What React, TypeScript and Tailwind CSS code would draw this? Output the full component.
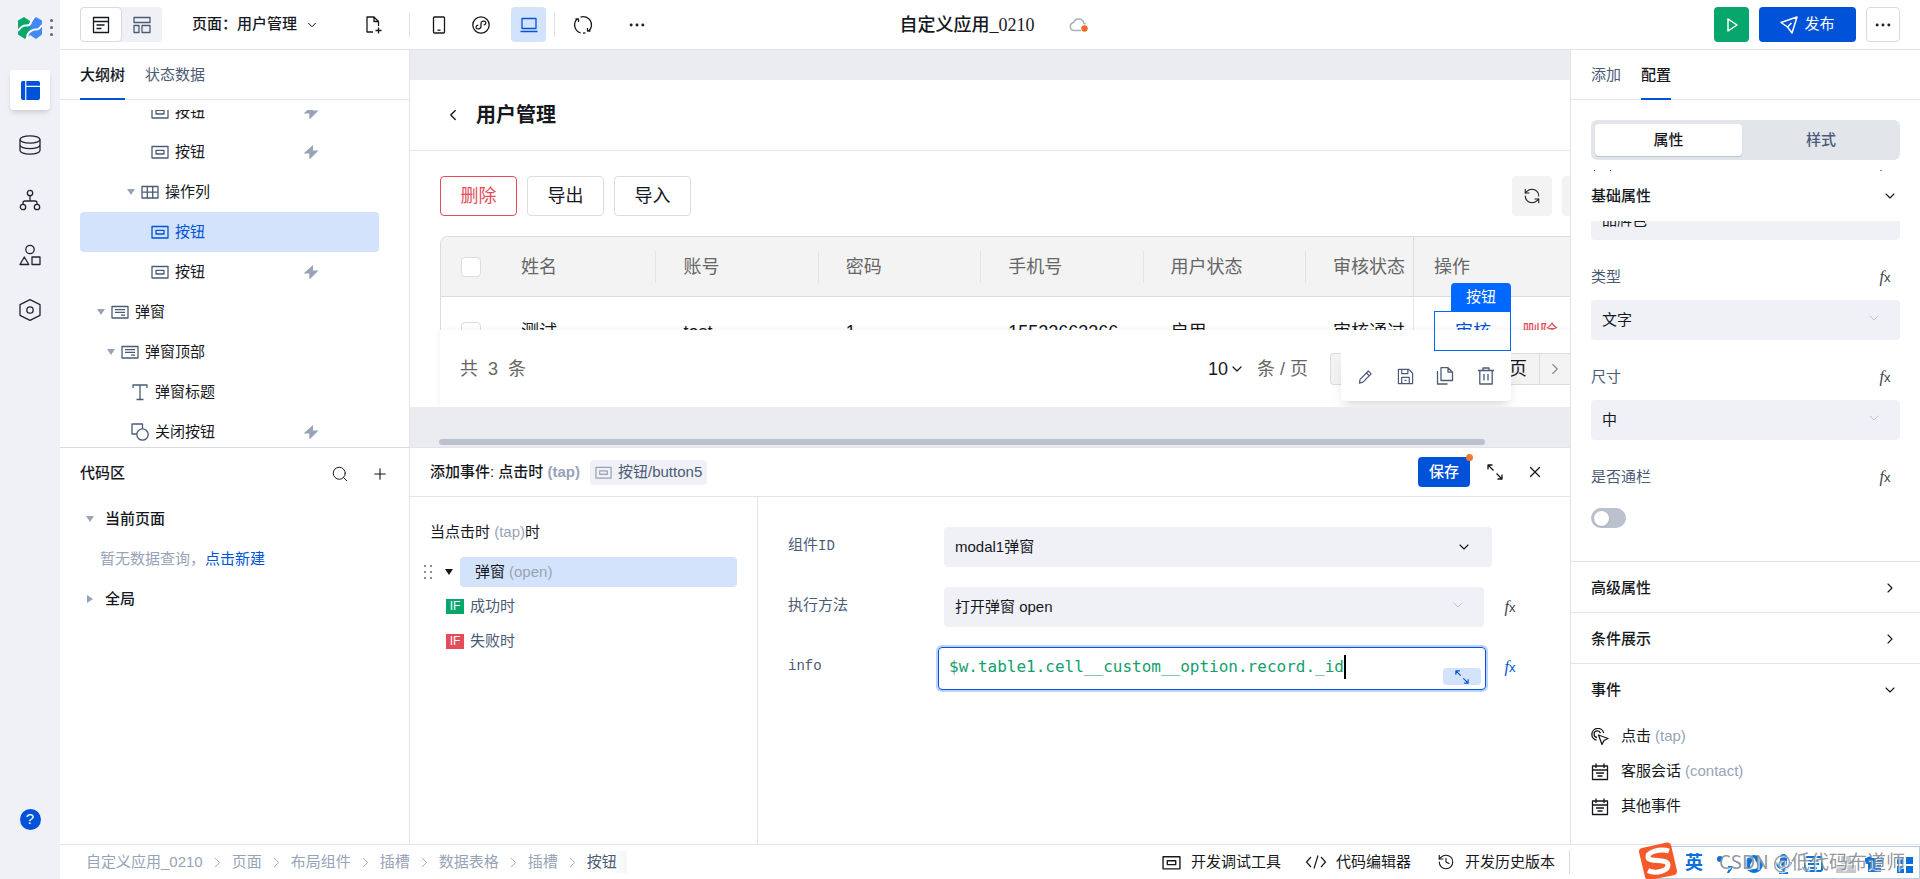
import type { ReactNode } from "react";
import {
  ChevronDown,
  ChevronLeft,
  ChevronRight,
  Ellipsis,
  History,
  Plus,
  RefreshCw,
  Search,
  X,
} from "lucide-react";

type IconProps = { className?: string };

function Svg({ className, box = 20, children }: IconProps & { box?: number; children: ReactNode }) {
  return (
    <svg
      viewBox={`0 0 ${box} ${box}`}
      className={className}
      fill="none"
      stroke="currentColor"
      strokeWidth="1.3"
      strokeLinejoin="round"
      aria-hidden="true"
    >
      {children}
    </svg>
  );
}

/* ---------- icons ---------- */

const Logo = () => (
  <svg viewBox="0 0 24 22" className="h-[22px] w-6" aria-hidden="true">
    <path d="M0 3.500 6 0l6 4v14l-5 4-7-4.500z" fill="#0aa66c" />
    <path d="M24 3.500 18 0l-6 5v13l6 4 6-4.500z" fill="#4388f5" />
    <path
      d="M0 14Q4 8 8 8.500 12 9 13 5L16 0M9 22Q9 16 13 14q3-2 5-1.500Q21 13 24 8"
      stroke="#fff"
      strokeWidth="2"
      fill="none"
    />
  </svg>
);

const LayoutIcon = ({ className }: IconProps) => (
  <svg viewBox="0 0 20 20" className={className} aria-hidden="true">
    <path d="M2 0h2.400v20H2a2 2 0 0 1-2-2V2a2 2 0 0 1 2-2zM5.600 0H18a2 2 0 0 1 2 2v3H5.600zM5.600 6.200H20V18a2 2 0 0 1-2 2H5.600z" fill="currentColor" />
  </svg>
);

const DatabaseIcon = ({ className }: IconProps) => (
  <Svg className={className} box={22}>
    <ellipse cx="11" cy="5.500" rx="10" ry="3.700" />
    <path d="M1 5.500v11c0 2 4.500 3.700 10 3.700s10-1.700 10-3.700v-11M1 11c0 2 4.500 3.700 10 3.700S21 13 21 11" />
  </Svg>
);

const FlowIcon = ({ className }: IconProps) => (
  <Svg className={className} box={22}>
    <circle cx="11" cy="4" r="2.700" />
    <circle cx="4" cy="18" r="2.700" />
    <circle cx="18" cy="18" r="2.700" />
    <path d="M11 6.700V12M4 15.300V14q0-2 2-2h10q2 0 2 2v1.300" />
  </Svg>
);

const ShapesIcon = ({ className }: IconProps) => (
  <Svg className={className} box={22}>
    <circle cx="11" cy="5.500" r="4.200" />
    <path d="M5.300 13 9.800 20.500H1zM13 13h8v7.500h-8z" />
  </Svg>
);

const HexIcon = ({ className }: IconProps) => (
  <Svg className={className} box={22}>
    <path d="m11 0.700 10 5v10.600l-10 5-10-5V5.700z" />
    <circle cx="11" cy="11" r="3.200" />
  </Svg>
);

const FormIcon = ({ className }: IconProps) => (
  <Svg className={className} box={18}>
    <path d="M1.500 1.500h15v15h-15zM1.500 5.500h15M4.500 9h8M4.500 12.500h5" />
  </Svg>
);

const BlocksIcon = ({ className }: IconProps) => (
  <Svg className={className} box={18}>
    <path d="M1 1.500h16v5H1zM1 9.500h5v7H1zM9 9.500h8v7H9z" />
  </Svg>
);

const NewPageIcon = ({ className }: IconProps) => (
  <Svg className={className} box={18}>
    <path d="M8 16H2V1h7l4.500 4.500V10M9 1v4.500h4.500M13.500 11.500v6M10.500 14.500h6" />
  </Svg>
);

const PhoneIcon = ({ className }: IconProps) => (
  <Svg className={className} box={18}>
    <rect x="3.500" y="1" width="11" height="16" rx="1" />
    <path d="M7.500 14.200h3" />
  </Svg>
);

const MiniProgramIcon = ({ className }: IconProps) => (
  <Svg className={className} box={18}>
    <circle cx="9" cy="9" r="8.200" />
    <path d="M6.300 9.200c-2 .2-2.600 1.600-2 2.800.8 1.300 4.700 1.300 4.700-1.500V7.300c0-2.600 3.800-2.700 4.600-1.300.7 1.200.1 2.600-1.900 2.800" />
  </Svg>
);

const LaptopIcon = ({ className }: IconProps) => (
  <Svg className={className} box={18}>
    <path d="M2 2.500h14v10H2zM0.500 15.500h17" />
  </Svg>
);

const CycleIcon = ({ className }: IconProps) => (
  <Svg className={className} box={20}>
    <path d="M7.500 17.800A8.200 8.200 0 0 1 4.200 4M2.500 4h3v3M7.500 2.200a8.200 8.200 0 0 1 8.300 13.800M17.500 16h-3v-3M10 18.200l2.500-.4" />
  </Svg>
);

const CloudIcon = ({ className }: IconProps) => (
  <svg viewBox="0 0 20 16" className={className} fill="none" aria-hidden="true">
    <path d="M12 13.500H5a4 4 0 0 1-.5-7.900 5.500 5.500 0 0 1 10.500.8l1.500.8" stroke="#a3aec0" strokeWidth="1.500" />
    <circle cx="15.500" cy="11.500" r="3.200" fill="#ed6b2d" />
  </svg>
);

const SendIcon = ({ className }: IconProps) => (
  <Svg className={className} box={18}>
    <path d="M1 6.500 17 1l-5 16-4.500-6zM7.500 11l4-4" strokeWidth="1.500" />
  </Svg>
);

const ButtonIcon = ({ className }: IconProps) => (
  <Svg className={className} box={18}>
    <path d="M1 3.500h16v11.500H1zM5 7.300h8v3.700H5z" />
  </Svg>
);

const GridIcon = ({ className }: IconProps) => (
  <Svg className={className} box={18}>
    <path d="M1 3.500h16v11.500H1zM1 9.200h16M6.300 3.500v11.500M11.700 3.500v11.500" />
  </Svg>
);

const ModalIcon = ({ className }: IconProps) => (
  <Svg className={className} box={18}>
    <path d="M1 3.500h16v11.500H1zM4 6.700h10M4 9.400h10M10 12.200h4" />
  </Svg>
);

const CloseBtnIcon = ({ className }: IconProps) => (
  <Svg className={className} box={18}>
    <path d="M6 11H1V1h10.500v5" />
    <circle cx="11.500" cy="11.500" r="5.700" />
  </Svg>
);

const TextIcon = ({ className }: IconProps) => (
  <Svg className={className} box={18}>
    <path d="M2 5V2h14v3M9 2v14.500M5.500 16.500h7" />
  </Svg>
);

const Bolt = () => (
  <svg viewBox="0 0 16 16" className="h-4 w-4 text-[#97a3b7]" fill="currentColor" aria-hidden="true">
    <path d="M10 1 0.500 9.500h5.700L6.500 15.500 15.500 6.500H10z" />
  </svg>
);

const Caret = ({ className }: IconProps) => (
  <svg viewBox="0 0 8 6" className={className} fill="currentColor" aria-hidden="true">
    <path d="M0 0h8L4 6z" />
  </svg>
);

const ExpandIcon = ({ className }: IconProps) => (
  <Svg className={className} box={16}>
    <path d="M1 5.500V1h4.500M1 1l5.500 5.500M15 10.500V15h-4.500M15 15 9.500 9.500" />
  </Svg>
);

const CalendarIcon = ({ className }: IconProps) => (
  <Svg className={className} box={18}>
    <path d="M1.500 3h15v13.500h-15zM1.500 7h15M5 0.500V5M13 0.500V5M5 10h8M6.500 13h5" />
  </Svg>
);

const TapIcon = ({ className }: IconProps) => (
  <Svg className={className} box={18}>
    <path d="M5.500 12.200A6 6 0 1 1 12.700 5M6 9.500A3.300 3.300 0 1 1 9.500 5.200M7.500 7l9.500 3.500-4 2-2 4z" />
  </Svg>
);

const PencilIcon = ({ className }: IconProps) => (
  <Svg className={className} box={18}>
    <path d="m2.500 16 .8-4L12 3.200l3 3L6.300 15zM10 5.300l3 3" />
  </Svg>
);

const SaveIcon = ({ className }: IconProps) => (
  <Svg className={className} box={18}>
    <path d="M1.500 1.500h11l4 4v11h-15zM5 1.500V6h6.500V1.500M5 16.500V10h8v6.500M8 13h2" />
  </Svg>
);

const CopyIcon = ({ className }: IconProps) => (
  <Svg className={className} box={18}>
    <path d="M5 0.700h7l4.500 4.500v8.300H5zM12 .7v4.500h4.500M1.500 4v13h10" />
  </Svg>
);

const TrashIcon = ({ className }: IconProps) => (
  <Svg className={className} box={18}>
    <path d="M1 3.500h16M6 3.500V1h6v2.500M2.800 3.500V17h12.400V3.500M7 7v6.500M11 7v6.500" />
  </Svg>
);

const CodeIcon = ({ className }: IconProps) => (
  <svg viewBox="0 0 22 16" className={className} fill="none" stroke="currentColor" strokeWidth="1.200" aria-hidden="true">
    <path d="M6 3 1.500 8 6 13M16 3l4.500 5-4.500 5M13 1.500 9 14.500" />
  </svg>
);

function Fx({ className = "h-5 text-[#3b3f47]" }: IconProps) {
  return (
    <button type="button" aria-label="表达式" className={`flex w-4 shrink-0 items-center justify-center ${className}`}>
      <span className="text-[13px] leading-5">
        <i className="font-['Liberation_Serif',serif] text-base leading-5">f</i>x
      </span>
    </button>
  );
}

/* ---------- data ---------- */

type TreeNode = {
  label: string;
  icon: (p: IconProps) => ReactNode;
  pad: string;
  open?: boolean;
  bolt?: boolean;
  active?: boolean;
};

const tree: TreeNode[] = [
  { label: "按钮", icon: ButtonIcon, pad: "pl-[57px]", bolt: true },
  { label: "按钮", icon: ButtonIcon, pad: "pl-[57px]", bolt: true },
  { label: "操作列", icon: GridIcon, pad: "pl-[47px]", open: true },
  { label: "按钮", icon: ButtonIcon, pad: "pl-[57px]", active: true },
  { label: "按钮", icon: ButtonIcon, pad: "pl-[57px]", bolt: true },
  { label: "弹窗", icon: ModalIcon, pad: "pl-[17px]", open: true },
  { label: "弹窗顶部", icon: ModalIcon, pad: "pl-[27px]", open: true },
  { label: "弹窗标题", icon: TextIcon, pad: "pl-[37px]" },
  { label: "关闭按钮", icon: CloseBtnIcon, pad: "pl-[37px]", bolt: true },
];

const columns = ["姓名", "账号", "密码", "手机号", "用户状态"];
const record = ["测试", "test", "1", "15522663366", "启用"];
const crumbs = ["自定义应用_0210", "页面", "布局组件", "插槽", "数据表格", "插槽"];

const selectCls =
  "h-10 w-full appearance-none rounded bg-[#eff1f6] pl-[11px] pr-10 text-[15px] text-[#16181d] outline-none";

/* ---------- parts ---------- */

function SideRail() {
  const items = [DatabaseIcon, FlowIcon, ShapesIcon, HexIcon];
  const names = ["数据源", "流程", "组件", "设置"];
  return (
    <nav className="flex w-[60px] shrink-0 flex-col items-center bg-[#eff1f6] pb-[49px]">
      <div className="flex h-[55px] w-full items-center gap-2 pl-[18px]">
        <Logo />
        <span className="flex flex-col gap-1">
          <i className="h-[3px] w-[3px] rounded-full bg-[#5b6880]" />
          <i className="h-[3px] w-[3px] rounded-full bg-[#5b6880]" />
          <i className="h-[3px] w-[3px] rounded-full bg-[#5b6880]" />
        </span>
      </div>
      <div className="mt-[15px] flex flex-col gap-[15px]">
        <button type="button" aria-label="页面" className="flex size-10 items-center justify-center rounded bg-white text-[#0052d9] shadow-md">
          <LayoutIcon className="size-[19px]" />
        </button>
        {items.map((Icon, i) => (
          <button key={names[i]} type="button" aria-label={names[i]} className="flex size-10 items-center justify-center text-[#22252b]">
            <Icon className="size-[22px]" />
          </button>
        ))}
      </div>
      <button type="button" aria-label="帮助" className="mt-auto flex size-[21px] items-center justify-center rounded-full bg-[#0052d9] text-[15px] text-white">
        ?
      </button>
    </nav>
  );
}

function TopBar() {
  return (
    <header className="flex h-[50px] shrink-0 items-center border-b border-[#e1e4ea] px-5">
      <div className="flex flex-1 items-center">
        <div className="flex rounded bg-[#eff1f6]">
          <button type="button" aria-label="大纲视图" className="flex h-[35px] w-[42px] items-center justify-center rounded border border-[#d5dae3] bg-white">
            <FormIcon className="size-[18px]" />
          </button>
          <button type="button" aria-label="布局视图" className="flex h-[35px] w-10 items-center justify-center text-[#4b5b76]">
            <BlocksIcon className="size-[18px]" />
          </button>
        </div>
        <button type="button" className="ml-[30px] flex items-center gap-2 text-[15px] font-medium whitespace-nowrap">
          页面：用户管理
          <ChevronDown className="size-[14px]" strokeWidth={1.700} />
        </button>
        <button type="button" aria-label="新建页面" className="ml-[46px]">
          <NewPageIcon className="size-[18px]" />
        </button>
        <span className="mr-[17px] ml-[26px] h-6 w-px bg-[#dde1e8]" />
        <div className="flex gap-2">
          <button type="button" aria-label="手机" className="flex h-[35px] w-[23px] items-center justify-center">
            <PhoneIcon className="size-[18px]" />
          </button>
          <button type="button" aria-label="小程序" className="flex h-[35px] w-[45px] items-center justify-center">
            <MiniProgramIcon className="size-[18px]" />
          </button>
          <button type="button" aria-label="电脑" className="flex size-[35px] items-center justify-center rounded bg-[#d4e3fc] text-[#0052d9]">
            <LaptopIcon className="size-[18px]" />
          </button>
        </div>
        <span className="mx-2 h-6 w-px bg-[#dde1e8]" />
        <button type="button" aria-label="刷新" className="mx-[10px]">
          <CycleIcon className="size-5" />
        </button>
        <button type="button" aria-label="更多工具" className="ml-6">
          <Ellipsis className="size-5" strokeWidth={1.500} />
        </button>
      </div>
      <div className="flex items-center gap-[34px] pl-2">
        <h1 className="font-['Liberation_Serif','Noto_Sans_CJK_SC',serif] text-lg font-medium">自定义应用_0210</h1>
        <CloudIcon className="h-4 w-5" />
      </div>
      <div className="flex flex-1 items-center justify-end gap-[10px]">
        <button type="button" aria-label="预览" className="flex size-[35px] items-center justify-center rounded bg-[#07a66d] text-white">
          <Svg className="size-4" box={16}>
            <path d="M4 2v12l9-6z" strokeWidth="1.500" />
          </Svg>
        </button>
        <button type="button" className="flex h-[35px] w-[97px] items-center justify-center gap-[6px] rounded bg-[#0052d9] text-[15px] text-white">
          <SendIcon className="size-[18px]" />
          发布
        </button>
        <button type="button" aria-label="更多" className="flex h-[35px] w-[34px] items-center justify-center rounded border border-[#d5dae3]">
          <Ellipsis className="size-5" strokeWidth={1.500} />
        </button>
      </div>
    </header>
  );
}

function LeftPanel() {
  return (
    <aside className="flex w-[350px] shrink-0 flex-col border-r border-[#e1e4ea]">
      <section className="flex h-1/2 flex-col">
        <div className="flex h-[50px] shrink-0 gap-5 border-b border-[#e1e4ea] px-5 text-[15px]">
          <button type="button" className="-mb-px border-b-2 border-[#0052d9] pt-[3px] font-medium">大纲树</button>
          <button type="button" className="-mb-px border-b-2 border-transparent pt-[3px] text-[#4b5b76]">状态数据</button>
        </div>
        <div className="mt-[10px] min-h-0 flex-1 overflow-hidden pr-[30px] pl-5">
          <ul className="-mt-[18px]">
            {tree.map(({ icon: Icon, ...n }, i) => (
              <li
                key={i}
                className={`flex h-10 items-center rounded pr-[60px] text-[15px] ${n.pad} ${n.active ? "bg-[#d4e3fc] text-[#0052d9]" : ""}`}
              >
                <span className="flex w-[14px] shrink-0">{n.open && <Caret className="h-[6px] w-2 text-[#97a3b7]" />}</span>
                <Icon className={`mr-[6px] size-[18px] ${n.active ? "" : "text-[#4b5b76]"}`} />
                {n.label}
                <span className="ml-auto">{n.bolt && <Bolt />}</span>
              </li>
            ))}
          </ul>
        </div>
      </section>
      <section className="h-1/2 overflow-hidden border-t border-[#d5dae3] px-5 text-[15px]">
        <div className="flex h-[51px] items-center">
          <h2 className="flex-1 font-medium">代码区</h2>
          <button type="button" aria-label="搜索" className="mr-[22px]">
            <Search className="size-[18px]" strokeWidth={1.300} />
          </button>
          <button type="button" aria-label="新增">
            <Plus className="size-[18px]" strokeWidth={1.500} />
          </button>
        </div>
        <button type="button" className="flex h-10 items-center gap-[11px] pl-[6px] font-medium">
          <Caret className="h-[6px] w-2 text-[#97a3b7]" />
          当前页面
        </button>
        <p className="flex h-10 items-center pl-5 text-[#97a3b7]">
          暂无数据查询，<a href="#new" className="text-[#0052d9]">点击新建</a>
        </p>
        <button type="button" className="flex h-10 items-center gap-[11px] pl-[6px] font-medium">
          <Caret className="h-[6px] w-2 -rotate-90 text-[#97a3b7]" />
          全局
        </button>
      </section>
    </aside>
  );
}

function SelectionOverlay() {
  return (
    <div className="absolute top-[203px] right-[59px] flex flex-col items-end">
      <span className="flex h-7 w-[60px] items-center justify-center rounded-t bg-[#0067ff] text-[15px] text-white">按钮</span>
      <span className="h-10 w-[77px] border border-[#0067ff]" />
      <div className="flex h-[50px] w-[170px] items-center justify-around rounded-b bg-white px-[5px] text-[#4b5b76] shadow-lg">
        <button type="button" aria-label="编辑"><PencilIcon className="size-[17px]" /></button>
        <button type="button" aria-label="保存为区块"><SaveIcon className="size-[17px]" /></button>
        <button type="button" aria-label="复制"><CopyIcon className="size-[18px]" /></button>
        <button type="button" aria-label="删除组件"><TrashIcon className="size-[18px]" /></button>
      </div>
    </div>
  );
}

function Canvas() {
  const th = "h-[60px] border-b border-[#dcdcdc] p-0 text-left font-normal";
  return (
    <section className="flex h-1/2 flex-col bg-[#ebecf0] pt-[30px]">
      <div className="relative flex min-h-0 flex-1 flex-col overflow-hidden bg-white">
        <div className="flex h-[71px] shrink-0 items-center gap-[14px] border-b border-[#e7e7e7] pl-[34px]">
          <ChevronLeft className="size-[18px]" strokeWidth={1.800} />
          <h2 className="text-xl font-bold">用户管理</h2>
        </div>
        <div className="flex shrink-0 items-center gap-[10px] pt-[25px] pl-[30px] text-lg">
          <button type="button" className="h-10 w-[77px] rounded border border-[#e34d59] text-[#e34d59]">删除</button>
          <button type="button" className="h-10 w-[77px] rounded border border-[#dcdcdc]">导出</button>
          <button type="button" className="h-10 w-[77px] rounded border border-[#dcdcdc]">导入</button>
          <button type="button" aria-label="刷新表格" className="ml-auto flex size-10 items-center justify-center rounded bg-[#f3f3f3]">
            <RefreshCw className="size-[18px] -scale-x-100" strokeWidth={1.400} />
          </button>
          <span className="h-10 w-2 rounded-l bg-[#f3f3f3]" />
        </div>
        <div className="mt-5 ml-[30px] min-h-0 flex-1 overflow-hidden rounded-tl-lg border-t border-l border-[#dcdcdc]">
          <table className="w-full table-fixed border-separate border-spacing-0 text-lg whitespace-nowrap">
            <thead className="bg-[#f3f3f3] text-[#666]">
              <tr>
                <th className={`${th} w-[53px]`}>
                  <input type="checkbox" aria-label="全选" className="ml-5 block size-5 appearance-none rounded border border-[#dcdcdc] bg-white" />
                </th>
                {columns.map((c) => (
                  <th key={c} className={th}>
                    <div className="flex h-8 items-center border-r border-[#e3e3e3] pl-[27px]">{c}</div>
                  </th>
                ))}
                <th className={`${th} w-[108px] overflow-hidden border-r pl-[27px]`}>审核状态</th>
                <th className={`${th} w-[156px] pl-5`}>操作</th>
              </tr>
            </thead>
            <tbody className="text-[#16181d]">
              <tr>
                <td className="h-[70px] p-0">
                  <input type="checkbox" aria-label="选择测试" className="ml-5 block size-5 appearance-none rounded border border-[#dcdcdc]" />
                </td>
                {record.map((c) => (
                  <td key={c} className="p-0 pl-[27px]">{c}</td>
                ))}
                <td className="overflow-hidden border-r border-[#e7e7e7] p-0 pl-[27px]">审核通过</td>
                <td className="p-0 pl-[41px]">
                  <div className="flex gap-[31px]">
                    <a href="#audit" className="text-[#0052d9]">审核</a>
                    <a href="#delete" className="text-[#e34d59]">删除</a>
                  </div>
                </td>
              </tr>
            </tbody>
          </table>
        </div>
        <div className="z-0 ml-[30px] flex h-[77px] shrink-0 items-center bg-white pl-5 text-lg text-[#666] shadow-[0_0_6px_rgba(0,0,0,0.07)]">
          <span className="flex gap-[10px]">
            <span>共</span>
            <span>3</span>
            <span>条</span>
          </span>
          <label className="ml-auto flex items-center gap-3">
            <span className="flex items-center">
              <select aria-label="每页条数" className="appearance-none text-lg text-[#16181d] outline-none" defaultValue="10">
                <option>10</option>
              </select>
              <ChevronDown className="size-4 text-[#16181d]" strokeWidth={1.800} />
            </span>
            条 / 页
          </label>
          <div className="ml-[22px] flex h-8 w-[240px] justify-end rounded-l border border-r-0 border-[#dcdcdc] bg-[#f3f3f3] text-[#16181d]">
            <span className="flex items-center border-r border-[#dcdcdc] pr-3">页</span>
            <button type="button" aria-label="下一页" className="flex w-[30px] items-center justify-center text-[#888]">
              <ChevronRight className="size-[18px]" strokeWidth={1.500} />
            </button>
          </div>
        </div>
        <SelectionOverlay />
      </div>
      <div className="h-10 shrink-0 pt-8 pr-[85px] pl-[29px]">
        <div className="h-[6px] rounded-full bg-[#bbc2ce]" />
      </div>
    </section>
  );
}

function EventEditor() {
  const label = "shrink-0 text-[15px] leading-9 text-[#4b5b76]";
  return (
    <section className="flex h-1/2 flex-col border-t border-[#e1e4ea] text-[15px]">
      <div className="flex h-[49px] shrink-0 items-center border-b border-[#e1e4ea] pr-[26px] pl-5">
        <h2 className="font-medium">
          添加事件: 点击时 <span className="font-bold text-[#97a3b7]">(tap)</span>
        </h2>
        <span className="ml-[10px] flex h-[25px] items-center gap-[6px] rounded bg-[#eff1f6] px-[5px] text-[#4b5b76]">
          <ButtonIcon className="size-[17px] text-[#97a3b7]" />
          按钮/button5
        </span>
        <div className="relative ml-auto">
          <button type="button" className="h-[30px] w-[52px] rounded bg-[#0052d9] font-medium text-white">保存</button>
          <i className="absolute -top-[3px] -right-[3px] size-[7px] rounded-full bg-[#ed7b2f]" />
        </div>
        <button type="button" aria-label="展开" className="ml-[17px]">
          <ExpandIcon className="size-4" />
        </button>
        <button type="button" aria-label="关闭" className="ml-[23px]">
          <X className="size-[18px]" strokeWidth={1.600} />
        </button>
      </div>
      <div className="flex min-h-0 flex-1">
        <div className="w-[348px] shrink-0 border-r border-[#e1e4ea] pt-5 pr-5 pl-[14px]">
          <p className="h-[30px] pl-[6px] leading-[30px]">
            当点击时 <span className="text-[#97a3b7]">(tap)</span>时
          </p>
          <div className="mt-[10px] flex items-center">
            <svg viewBox="0 0 8 16" className="h-4 w-2 text-[#8b8f98]" fill="currentColor" aria-hidden="true">
              <path d="M0 1h2v2H0zM6 1h2v2H6zM0 7h2v2H0zM6 7h2v2H6zM0 13h2v2H0zM6 13h2v2H6z" />
            </svg>
            <Caret className="mr-[7px] ml-[13px] h-[6px] w-2" />
            <div className="flex h-[30px] flex-1 items-center gap-1 rounded bg-[#d4e3fc] pl-[15px]">
              弹窗 <span className="text-[#97a3b7]">(open)</span>
            </div>
          </div>
          <div className="flex h-[35px] items-center gap-[6px] pt-1 pl-[22px] text-[#4b5b76]">
            <span className="h-[15px] w-[18px] bg-[#07a66d] text-center text-xs leading-[15px] text-white">IF</span>
            成功时
          </div>
          <div className="flex h-[35px] items-center gap-[6px] pt-1 pl-[22px] text-[#4b5b76]">
            <span className="h-[15px] w-[18px] bg-[#e34d59] text-center text-xs leading-[15px] text-white">IF</span>
            失败时
          </div>
        </div>
        <div className="flex min-w-0 flex-1 flex-col gap-5 pt-[30px] pr-[52px] pl-[30px]">
          <div className="flex">
            <label htmlFor="comp" className={`${label} w-[156px]`}>
              组件<span className="font-['Liberation_Mono',monospace] text-sm">ID</span>
            </label>
            <div className="relative mr-[26px] flex-1">
              <select id="comp" className={selectCls}>
                <option>modal1弹窗</option>
              </select>
              <ChevronDown className="pointer-events-none absolute top-3 right-5 size-4" strokeWidth={1.600} />
            </div>
          </div>
          <div className="flex">
            <label htmlFor="method" className={`${label} w-[156px]`}>执行方法</label>
            <div className="relative mr-[18px] flex-1">
              <select id="method" className={selectCls}>
                <option>打开弹窗 open</option>
              </select>
              <ChevronDown className="pointer-events-none absolute top-[10px] right-[18px] size-4 text-[#b9bdc6]" strokeWidth={1.300} />
            </div>
            <Fx className="h-10 text-[#3b3f47]" />
          </div>
          <div className="flex">
            <label htmlFor="info" className={`${label} w-[150px]`}>
              <span className="font-['Liberation_Mono',monospace] text-sm">info</span>
            </label>
            <div className="mr-4 flex h-[43px] flex-1 rounded border border-[#0052d9] pt-[7px] pr-1 pb-1 pl-[10px] ring-2 ring-[#bcd3fa]">
              <input
                id="info"
                defaultValue="$w.table1.cell__custom__option.record._id"
                className="h-6 [field-sizing:content] font-['DejaVu_Sans_Mono',monospace] text-base text-[#12a06c] outline-none"
              />
              <i className="h-6 w-[2px] bg-black" />
              <button type="button" aria-label="展开编辑" className="mt-auto ml-auto flex h-[17px] w-[38px] items-center justify-center rounded bg-[#d4e3fc] text-[#0052d9]">
                <ExpandIcon className="size-[14px]" />
              </button>
            </div>
            <Fx className="h-10 text-[#0052d9]" />
          </div>
        </div>
      </div>
    </section>
  );
}

function PropSelect({ id, label, value }: { id: string; label: string; value: string }) {
  return (
    <div className="pt-5">
      <div className="mb-[6px] flex h-[34px] items-center justify-between pr-[7px]">
        <label htmlFor={id} className="text-[#4b5b76]">{label}</label>
        <Fx />
      </div>
      <div className="relative">
        <select id={id} className={selectCls}>
          <option>{value}</option>
        </select>
        <ChevronDown className="pointer-events-none absolute top-[10px] right-[18px] size-4 text-[#b9bdc6]" strokeWidth={1.300} />
      </div>
    </div>
  );
}

function RightPanel() {
  const events = [
    { name: "点击", code: "(tap)", icon: TapIcon },
    { name: "客服会话", code: "(contact)", icon: CalendarIcon },
    { name: "其他事件", code: "", icon: CalendarIcon },
  ];
  return (
    <aside className="flex w-[350px] shrink-0 flex-col overflow-hidden border-l border-[#e1e4ea] text-[15px]">
      <div className="flex h-[50px] shrink-0 gap-5 border-b border-[#e1e4ea] px-5">
        <button type="button" className="-mb-px border-b-2 border-transparent pt-[3px] text-[#4b5b76]">添加</button>
        <button type="button" className="-mb-px border-b-2 border-[#0052d9] pt-[3px] font-medium">配置</button>
      </div>
      <div className="mx-5 mt-5 flex h-10 shrink-0 gap-1 rounded-md bg-[#e2e5ea] p-1">
        <button type="button" className="w-[147px] rounded-sm bg-white font-medium shadow-[0_1px_1px_#bbc2ce]">属性</button>
        <button type="button" className="flex-1 font-medium text-[#4b5b76]">样式</button>
      </div>
      <div className="px-5">
        {/* tail of the scrolled-away label row */}
        <div className="mt-2 flex h-[3px] items-end gap-[15px] pl-[3px]">
          <i className="h-px w-px bg-[#4b5b76]" />
          <i className="h-px w-px bg-[#4b5b76]" />
          <i className="mr-[18px] ml-auto h-px w-[2px] bg-[#888]" />
        </div>
        <button type="button" className="flex h-[50px] w-full items-center justify-between pr-[2px] font-medium">
          基础属性
          <ChevronDown className="size-4" strokeWidth={1.700} />
        </button>
        <div className="flex h-[19px] items-end overflow-hidden">
          <select aria-label="风格" className={`${selectCls} shrink-0`}>
            <option>品牌色</option>
          </select>
        </div>
        <PropSelect id="type" label="类型" value="文字" />
        <PropSelect id="size" label="尺寸" value="中" />
        <div className="pt-5 pb-[33px]">
          <div className="mb-[14px] flex h-[34px] items-center justify-between pr-[7px]">
            <label htmlFor="block" className="text-[#4b5b76]">是否通栏</label>
            <Fx />
          </div>
          <input
            id="block"
            type="checkbox"
            role="switch"
            className="flex h-5 w-[35px] appearance-none items-center rounded-full bg-[#bbc2ce] px-[3px] before:size-[15px] before:rounded-full before:bg-white before:shadow before:content-['']"
          />
        </div>
      </div>
      {["高级属性", "条件展示", "事件"].map((s) => (
        <button
          key={s}
          type="button"
          className="flex h-[51px] shrink-0 items-center justify-between border-t border-[#e1e4ea] pt-[2px] pr-[22px] pl-5 font-medium"
        >
          {s}
          {s === "事件" ? (
            <ChevronDown className="size-4" strokeWidth={1.700} />
          ) : (
            <ChevronRight className="size-4" strokeWidth={1.700} />
          )}
        </button>
      ))}
      <ul className="mt-[5px] px-5">
        {events.map(({ name, code, icon: Icon }) => (
          <li key={name} className="flex h-[35px] items-center">
            <Icon className="mr-3 size-[18px]" />
            {name}
            <span className="ml-1 text-[#97a3b7]">{code}</span>
          </li>
        ))}
      </ul>
    </aside>
  );
}

function ImeBar() {
  return (
    <div className="absolute right-0 bottom-0 flex h-[33px] w-[268px] items-center border border-[#b8cbe0] bg-white text-[#0a6fdc]">
      <svg viewBox="0 0 40 38" className="absolute -top-[5px] -left-[15px] h-[38px] w-10" aria-hidden="true">
        <path d="M4 6 29 0.500q3-.5 4 2.500l6 26q.5 3-2.500 4L12 38q-4 .5-5-3L1 10q-.5-3 3-4z" fill="#f4592a" />
        <path d="M31 9C22 6 9 10 10 15.500c1 5 19 1 20 7 .8 6-12 10-20 6" fill="none" stroke="#fff" strokeWidth="5" />
      </svg>
      <b className="ml-8 text-lg">英</b>
      <svg viewBox="0 0 200 24" className="ml-[10px] h-6 w-[200px]" fill="currentColor" aria-hidden="true">
        <circle cx="7" cy="8" r="3" />
        <path d="M15 15h4v3l-3 4h-2l1.500-4z" />
        <circle cx="41" cy="13" r="9" />
        <path d="m41 7 4 7a4 4 0 1 1-8 0z" fill="#fff" />
        <rect x="67" y="3" width="7" height="12" rx="3.500" />
        <path d="M63 11c1 9 14 9 15 0M70.500 18v4M66 22h9" fill="none" stroke="currentColor" strokeWidth="2" />
        <rect x="92" y="6" width="17" height="14" rx="2" fill="none" stroke="currentColor" strokeWidth="2" />
        <path d="M95 9h11v2H95zM95 12h11v2H95zM97 16h7v2h-7z" />
        <path d="M123 14h20v8h-20zM128 5h10v8h-10z" fill="#c4c7cc" />
        <path d="M152 7l6-2c1 3 6 3 7 0l6 2v6h-3v8h-13v-8h-3z" />
        <path d="M184 6h7v7h-7zM193 6h7v7h-7zM184 15h7v7h-7zM193 15h7v7h-7z" />
      </svg>
      <span className="absolute top-0 right-[14px] font-['Noto_Sans_CJK_SC',sans-serif] text-[19px] leading-7 whitespace-nowrap text-[#85898f]/90 [text-shadow:1px_1px_1px_#fff]">
        CSDN @低代码布道师
      </span>
    </div>
  );
}

function StatusBar() {
  return (
    <footer className="flex h-[35px] shrink-0 items-center border-t border-[#e1e4ea] pl-[26px] text-[15px] whitespace-nowrap">
      <nav aria-label="路径" className="flex items-center text-[#97a3b7]">
        {crumbs.map((c, i) => (
          <span key={i} className="flex items-center">
            <a href="#crumb">{c}</a>
            <ChevronRight className="mx-[6px] size-[17px]" strokeWidth={1.300} />
          </span>
        ))}
        <span className="bg-linear-to-r from-white from-50% to-[#f5f6f9] pr-[10px] text-[#4b5b76]">按钮</span>
      </nav>
      <div className="mr-[350px] ml-auto flex h-6 items-center border-r border-[#d5dae3] pr-[14px]">
        <button type="button" className="flex items-center gap-[10px]">
          <ButtonIcon className="size-[19px]" />
          开发调试工具
        </button>
        <button type="button" className="ml-6 flex items-center gap-[9px]">
          <CodeIcon className="h-4 w-[22px]" />
          代码编辑器
        </button>
        <button type="button" className="ml-[26px] flex items-center gap-[10px]">
          <History className="size-[18px]" strokeWidth={1.500} />
          开发历史版本
        </button>
      </div>
    </footer>
  );
}

export default function App() {
  return (
    <div className="relative flex h-screen overflow-hidden bg-white font-['Liberation_Sans','Noto_Sans_CJK_SC',sans-serif] text-[#16181d]">
      <SideRail />
      <div className="flex min-w-0 flex-1 flex-col">
        <TopBar />
        <div className="flex min-h-0 flex-1">
          <LeftPanel />
          <main className="flex min-w-0 flex-1 flex-col">
            <Canvas />
            <EventEditor />
          </main>
          <RightPanel />
        </div>
        <StatusBar />
      </div>
      <ImeBar />
    </div>
  );
}
